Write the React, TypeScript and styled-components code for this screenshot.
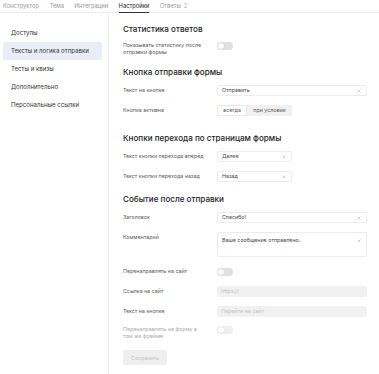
import React from "react";
import styled, { createGlobalStyle, css } from "styled-components";

const Global = createGlobalStyle`
  html, body { margin: 0; padding: 0; background: #fff; }
  body { font-family: Inter, "Noto Sans", "DejaVu Sans", sans-serif; color: #222; }
  * { box-sizing: border-box; }
`;

const Page = styled.div`
  width: 379px;
  height: 374px;
  display: flex;
  flex-direction: column;
  overflow: hidden;
`;

const Tabs = styled.div`
  display: flex;
  gap: 10.5px;
  padding-left: 3px;
  height: 13px;
  border-bottom: 1px solid #ececec;
  flex: none;
`;

const Tab = styled.div<{ $active?: boolean }>`
  font-size: 5.8px;
  line-height: 12px;
  height: 13px;
  color: ${(p) => (p.$active ? "#222" : "#999")};
  border-bottom: 1px solid ${(p) => (p.$active ? "#333" : "transparent")};
  white-space: nowrap;
`;

const Count = styled.span`
  color: #b0b0b0;
  margin-left: 3px;
`;

const Body = styled.div`
  display: flex;
  flex: 1;
`;

const Sidebar = styled.nav`
  width: 109px;
  flex: none;
  border-right: 1px solid #ededed;
  padding: 11px 6px 0 3px;
  display: flex;
  flex-direction: column;
`;

const NavItem = styled.div<{ $active?: boolean }>`
  height: 18px;
  line-height: 18px;
  padding-left: 8px;
  font-size: 6.1px;
  color: #333;
  border-radius: 2px;
  white-space: nowrap;
  background: ${(p) => (p.$active ? "#ebedf6" : "transparent")};
`;

const Main = styled.main`
  flex: 1;
  padding: 10px 0 0 14px;
  display: flex;
  flex-direction: column;
`;

const Section = styled.section<{ $top?: number }>`
  margin-top: ${(p) => p.$top ?? 0}px;
  display: flex;
  flex-direction: column;
`;

const SectionTitle = styled.h2`
  margin: 0 0 7px;
  font-size: 8.1px;
  line-height: 12px;
  font-weight: 500;
  color: #222;
`;

const Rows = styled.div`
  display: flex;
  flex-direction: column;
  gap: 9px;
`;

const Row = styled.div<{ $align?: "start" | "center" }>`
  display: flex;
  align-items: ${(p) => (p.$align === "start" ? "flex-start" : "center")};
  min-height: 11px;
`;

const Label = styled.div<{ $muted?: boolean; $top?: number }>`
  width: 94px;
  flex: none;
  font-size: 5.3px;
  line-height: 7px;
  color: ${(p) => (p.$muted ? "#ababab" : "#5a5a5a")};
  padding-right: 8px;
  padding-top: ${(p) => p.$top ?? 0}px;
`;

const fieldBase = css`
  position: relative;
  font-size: 5.3px;
  border-radius: 2px;
  padding-left: 4px;
`;

const Input = styled.div<{ $w: number; $disabled?: boolean }>`
  ${fieldBase};
  width: ${(p) => p.$w}px;
  height: 11px;
  line-height: 11px;
  ${(p) =>
    p.$disabled
      ? css`
          background: #f1f1f1;
          color: #c0c0c0;
        `
      : css`
          background: #fff;
          border: 1px solid #ececec;
          line-height: 9px;
          color: #444;
        `}
`;

const TextArea = styled.div`
  ${fieldBase};
  width: 150px;
  height: 25px;
  border: 1px solid #ececec;
  background: #fff;
  color: #444;
  line-height: 7px;
  padding-top: 4px;
`;

const Clear = styled.svg<{ $top?: number }>`
  position: absolute;
  right: 5px;
  top: ${(p) => p.$top ?? 2.5}px;
  width: 4px;
  height: 4px;
`;

const ClearIcon = ({ top }: { top?: number }) => (
  <Clear $top={top} viewBox="0 0 8 8">
    <path d="M1 1L7 7M7 1L1 7" stroke="#aaa" strokeWidth="1" fill="none" />
  </Clear>
);

const Toggle = styled.div<{ $disabled?: boolean }>`
  position: relative;
  width: 16px;
  height: 8px;
  border-radius: 4px;
  background: ${(p) => (p.$disabled ? "#efefef" : "#e0e0e0")};
  flex: none;
  &::after {
    content: "";
    position: absolute;
    left: 1px;
    top: 1px;
    width: 6px;
    height: 6px;
    border-radius: 50%;
    background: #fff;
    box-shadow: 0 0 1px rgba(0, 0, 0, 0.15);
  }
`;

const Segmented = styled.div`
  display: flex;
  height: 11px;
  border-radius: 2px;
  background: #f0f0f0;
  width: 75px;
`;

const Segment = styled.div<{ $active?: boolean }>`
  font-size: 5.3px;
  line-height: 11px;
  color: #555;
  text-align: center;
  border-radius: 2px;
  ${(p) =>
    p.$active
      ? css`
          width: 30px;
          background: #fff;
          box-shadow: inset 0 0 0 1px #e8e8e8;
        `
      : css`
          flex: 1;
        `}
`;

const SaveButton = styled.button`
  margin-top: 10px;
  align-self: flex-start;
  width: 44px;
  height: 15px;
  border: none;
  border-radius: 2px;
  background: #efefef;
  color: #c2c2c2;
  font-family: inherit;
  font-size: 5.3px;
  padding: 0;
`;

export default function App() {
  return (
    <>
      <Global />
      <Page>
        <Tabs>
          <Tab>Конструктор</Tab>
          <Tab>Тема</Tab>
          <Tab>Интеграции</Tab>
          <Tab $active>Настройки</Tab>
          <Tab>
            Ответы<Count>2</Count>
          </Tab>
        </Tabs>
        <Body>
          <Sidebar>
            <NavItem>Доступы</NavItem>
            <NavItem $active>Тексты и логика отправки</NavItem>
            <NavItem>Тесты и квизы</NavItem>
            <NavItem>Дополнительно</NavItem>
            <NavItem>Персональные ссылки</NavItem>
          </Sidebar>
          <Main>
            <Section>
              <SectionTitle>Статистика ответов</SectionTitle>
              <Rows>
                <Row $align="start">
                  <Label>Показывать статистику после отправки формы</Label>
                  <Toggle />
                </Row>
              </Rows>
            </Section>

            <Section $top={10}>
              <SectionTitle>Кнопка отправки формы</SectionTitle>
              <Rows>
                <Row>
                  <Label>Текст на кнопке</Label>
                  <Input $w={150}>
                    Отправить
                    <ClearIcon />
                  </Input>
                </Row>
                <Row>
                  <Label>Кнопка активна</Label>
                  <Segmented>
                    <Segment $active>всегда</Segment>
                    <Segment>при условии</Segment>
                  </Segmented>
                </Row>
              </Rows>
            </Section>

            <Section $top={16}>
              <SectionTitle>Кнопки перехода по страницам формы</SectionTitle>
              <Rows>
                <Row>
                  <Label>Текст кнопки перехода вперёд</Label>
                  <Input $w={75}>
                    Далее
                    <ClearIcon />
                  </Input>
                </Row>
                <Row>
                  <Label>Текст кнопки перехода назад</Label>
                  <Input $w={75}>
                    Назад
                    <ClearIcon />
                  </Input>
                </Row>
              </Rows>
            </Section>

            <Section $top={11}>
              <SectionTitle>Событие после отправки</SectionTitle>
              <Rows>
                <Row>
                  <Label>Заголовок</Label>
                  <Input $w={150}>
                    Спасибо!
                    <ClearIcon />
                  </Input>
                </Row>
                <Row $align="start">
                  <Label $top={2}>Комментарий</Label>
                  <TextArea>
                    Ваше сообщение отправлено.
                    <ClearIcon top={5.5} />
                  </TextArea>
                </Row>
                <Row>
                  <Label>Перенаправлять на сайт</Label>
                  <Toggle />
                </Row>
                <Row>
                  <Label>Ссылка на сайт</Label>
                  <Input $w={150} $disabled>
                    https://
                  </Input>
                </Row>
                <Row>
                  <Label>Текст на кнопке</Label>
                  <Input $w={150} $disabled>
                    Перейти на сайт
                  </Input>
                </Row>
                <Row $align="start">
                  <Label $muted>
                    Перенаправлять на форму в
                    <br />
                    том же фрейме
                  </Label>
                  <Toggle $disabled />
                </Row>
              </Rows>
            </Section>

            <SaveButton>Сохранить</SaveButton>
          </Main>
        </Body>
      </Page>
    </>
  );
}
